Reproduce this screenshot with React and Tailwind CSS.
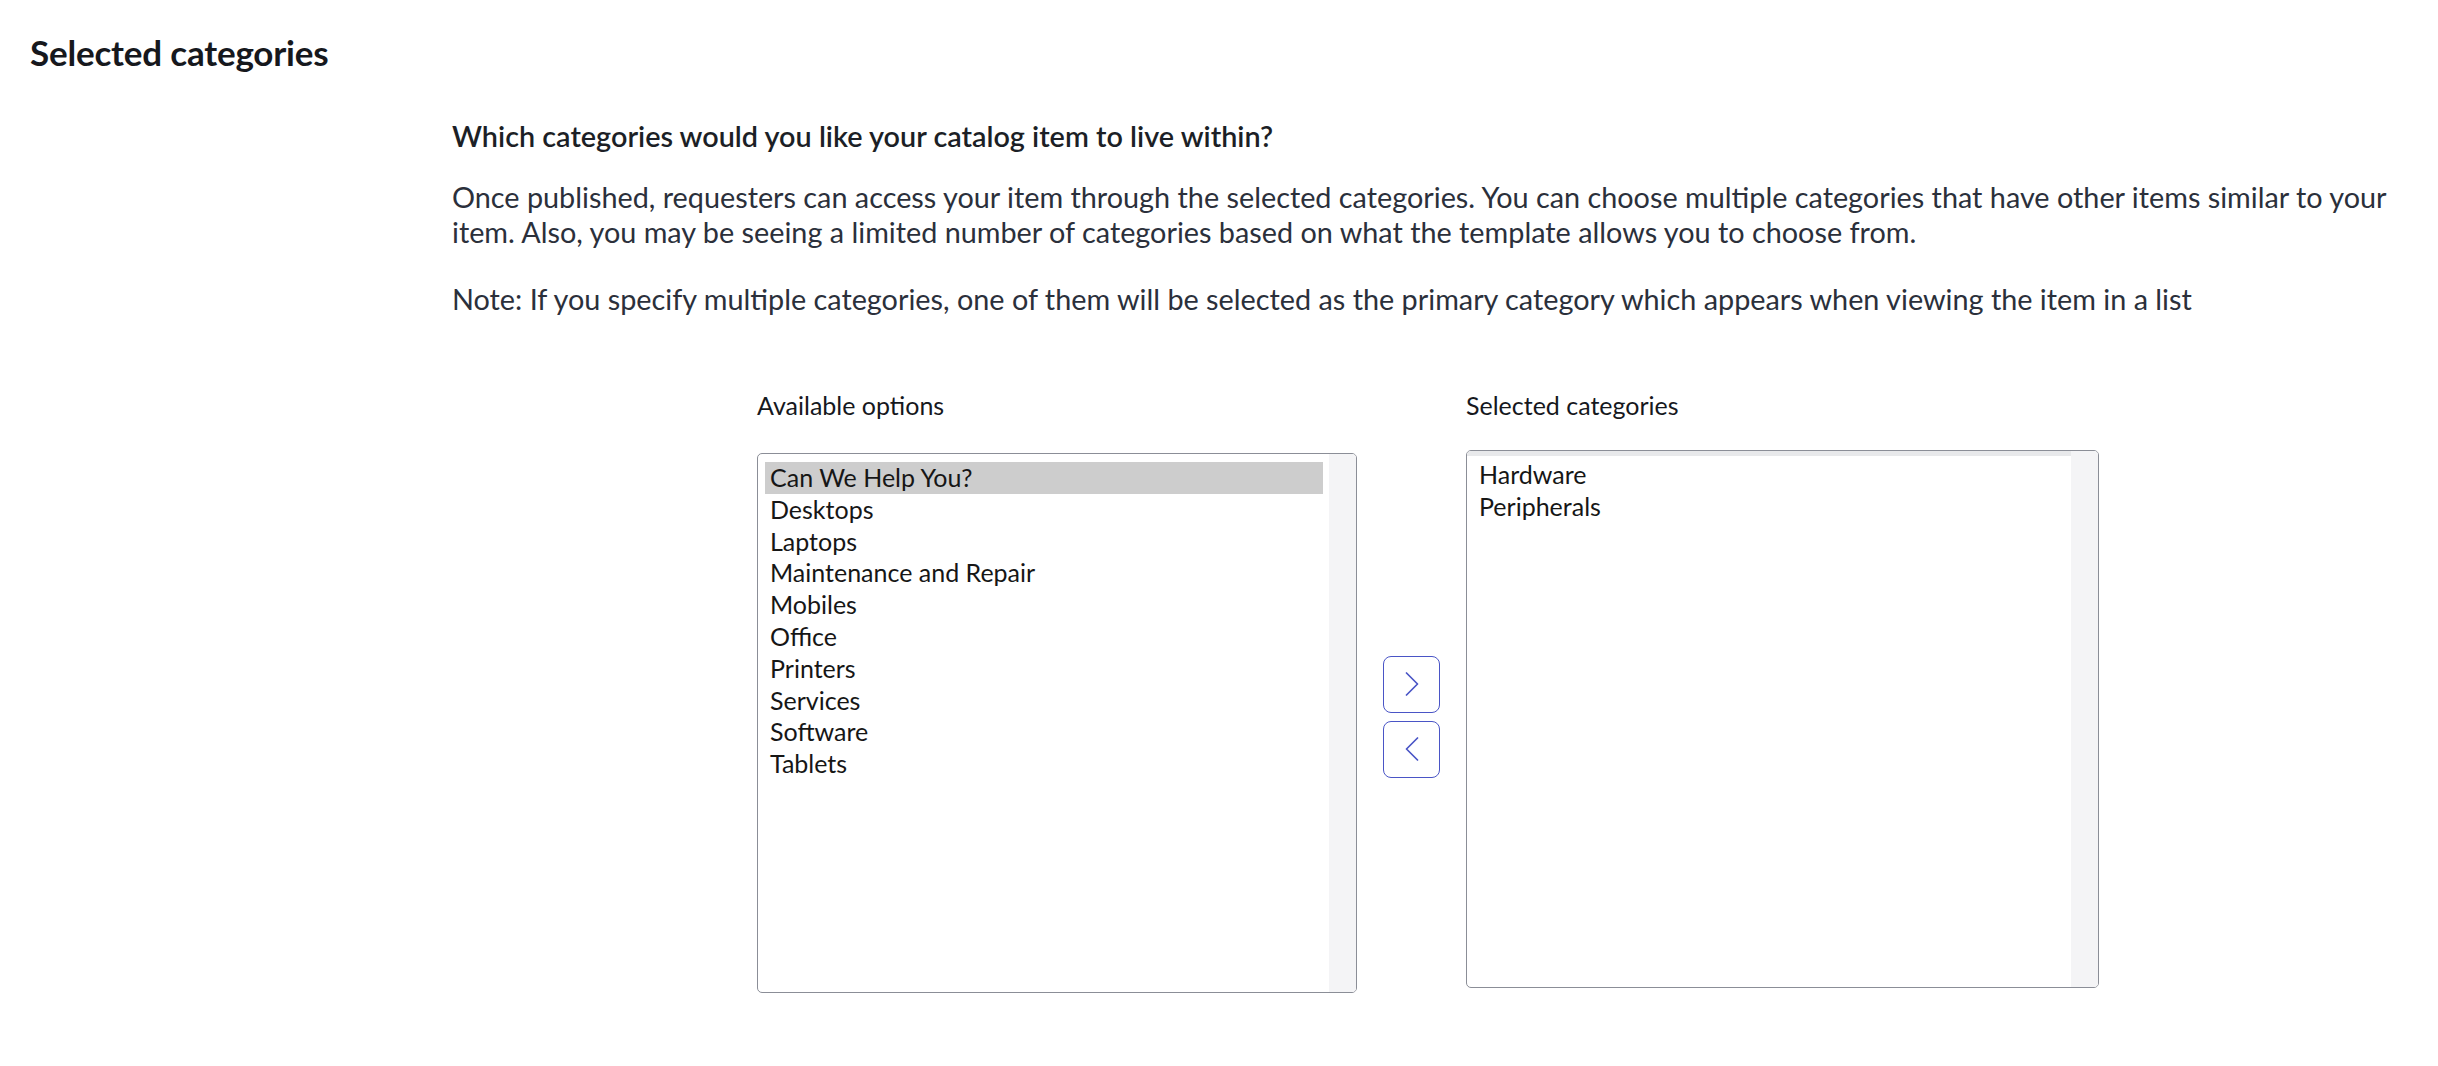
import React, { useState } from "react";

const AVAILABLE = ["Can We Help You?", "Desktops", "Laptops", "Maintenance and Repair", "Mobiles",
    "Office", "Printers", "Services", "Software", "Tablets"];
const SELECTED = ["Hardware", "Peripherals"];

const Chevron = ({ dir }) => (
    <svg width="16" height="24" viewBox="0 0 16 24" fill="none" stroke="#4a55c6" strokeWidth="1.7" strokeLinecap="round" strokeLinejoin="round">
        {dir === "right" ? <path d="M2.5 1 L13.5 12 L2.5 23" /> : <path d="M13.5 1 L2.5 12 L13.5 23" />}
    </svg>
);

const ListBox = ({ items, active, onPick, topBand, className }) => (
    <div className={`relative flex border-[1.5px] border-[#8b8e97] rounded-[5px] overflow-hidden bg-white ${className}`}>
        <div className="flex-1 flex flex-col">
            {topBand && <div className="h-[5px] bg-[#e8e9eb] shrink-0" />}
            <ul className={`pl-[7px] pr-[6px] ${topBand ? "pt-[3px]" : "pt-[8px]"}`}>
                {items.map(item => (
                    <li
                        key={item}
                        onClick={() => onPick(item)}
                        className={`pl-[5px] text-[25px] leading-[31.8px] text-[#161616] cursor-default ${active === item ? "bg-[#cdcdcd]" : ""}`}
                    >
                        {item}
                    </li>
                ))}
            </ul>
        </div>
        <div className="w-[27px] bg-[#f4f4f6] shrink-0" />
    </div>
);

const App = () => {
    const [active, setActive] = useState("Can We Help You?");
    const [picked, setPicked] = useState(null);

    return (
        <div className="min-h-screen bg-white font-['Lato','Liberation_Sans',sans-serif] text-[#2b303b]">
            <h2 className="pl-[30px] pt-[30px] text-[35px] leading-[44px] font-bold text-[#16181d] tracking-[-0.2px]">
                Selected categories
            </h2>

            <div className="pl-[452px] pr-[48px] mt-[45px]">
                <h3 className="text-[28.8px] leading-[34px] font-semibold text-[#1c1f26]">
                    Which categories would you like your catalog item to live within?
                </h3>
                <p className="mt-[27px] text-[28.8px] leading-[35px]">
                    Once published, requesters can access your item through the selected categories. You can choose multiple categories that have other items similar to your item. Also, you may be seeing a limited number of categories based on what the template allows you to choose from.
                </p>
                <p className="mt-[32px] text-[28.8px] leading-[35px]">
                    Note: If you specify multiple categories, one of them will be selected as the primary category which appears when viewing the item in a list
                </p>
            </div>

            <div className="pl-[757px] mt-[73px] grid grid-cols-[600px_57px_633px] gap-x-[26px]">
                <div className="text-[25px] leading-[30px] text-[#16181d]">Available options</div>
                <div />
                <div className="text-[25px] leading-[30px] text-[#16181d]">Selected categories</div>

                <ListBox items={AVAILABLE} active={active} onPick={setActive} className="mt-[33px] h-[540px]" />

                <div className="mt-[30px] flex flex-col justify-center gap-[8px] pb-[10px]">
                    <button className="w-[57px] h-[57px] border-[1.5px] border-[#4a55c6] rounded-[8px] bg-white flex items-center justify-center">
                        <Chevron dir="right" />
                    </button>
                    <button className="w-[57px] h-[57px] border-[1.5px] border-[#4a55c6] rounded-[8px] bg-white flex items-center justify-center">
                        <Chevron dir="left" />
                    </button>
                </div>

                <ListBox items={SELECTED} active={picked} onPick={setPicked} topBand className="mt-[30px] h-[538px]" />
            </div>
        </div>
    );
};

export default App;
